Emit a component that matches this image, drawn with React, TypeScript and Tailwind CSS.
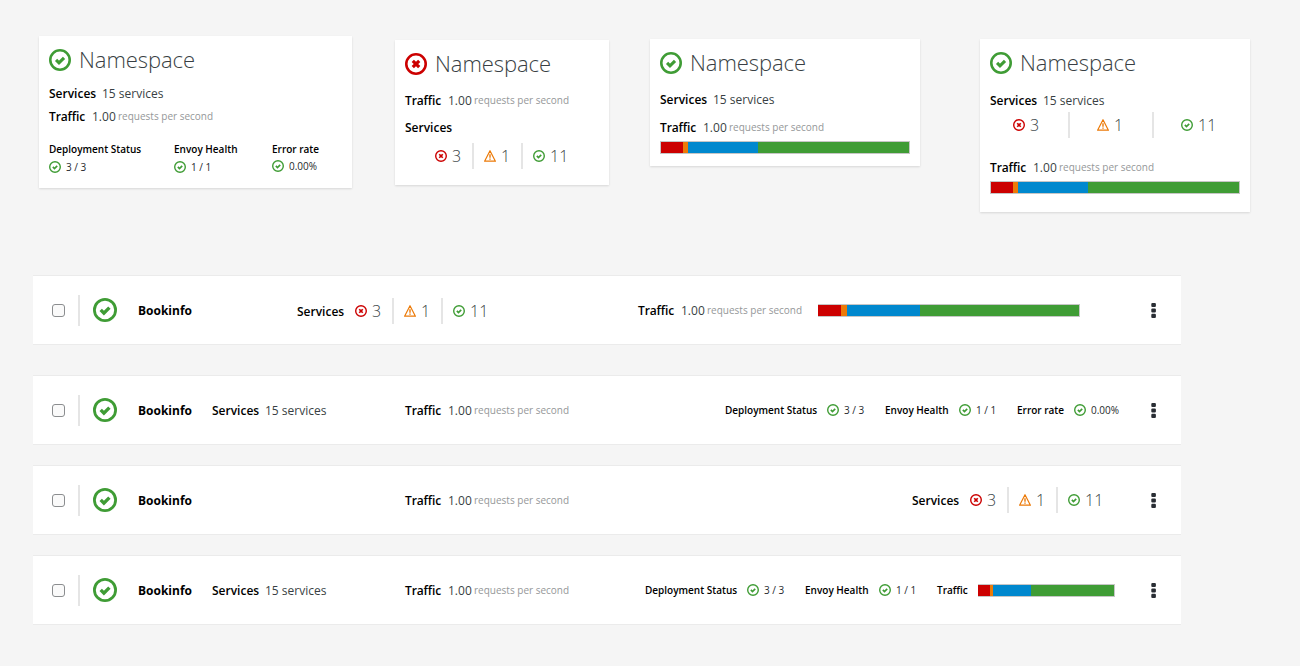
import type { ReactNode } from 'react';

type IconProps = { className?: string };

function OkIcon({ className = 'size-3' }: IconProps) {
  return (
    <svg viewBox="0 0 24 24" fill="none" stroke="#3f9c35" className={`shrink-0 ${className}`}>
      <circle cx="12" cy="12" r="10.6" strokeWidth="2.8" />
      <path d="M7.7 11.9 10.9 15.1 16.4 9.6" strokeWidth="3.4" />
    </svg>
  );
}

function ErrorIcon({ className = 'size-3' }: IconProps) {
  return (
    <svg viewBox="0 0 24 24" fill="none" stroke="#cc0000" className={`shrink-0 ${className}`}>
      <circle cx="12" cy="12" r="10.6" strokeWidth="2.8" />
      <path d="M8.5 8.5 15.5 15.5M15.5 8.5 8.5 15.5" strokeWidth="3.5" />
    </svg>
  );
}

function WarningIcon({ className = 'size-3' }: IconProps) {
  return (
    <svg viewBox="0 0 24 24" fill="none" stroke="#ec7a08" className={`shrink-0 ${className}`}>
      <path d="M12 1.4 22.8 22.4H1.2Z" strokeWidth="2.4" strokeLinejoin="round" />
      <path d="M12 8.4V15.4M12 16.8V19.6" strokeWidth="2.8" />
    </svg>
  );
}

function Label({ children, className = '' }: { children: ReactNode; className?: string }) {
  return <span className={`shrink-0 font-semibold text-black ${className}`}>{children}</span>;
}

function ServiceTotal({ className = '' }: IconProps) {
  return (
    <div className={`flex h-5 shrink-0 items-center text-xs/5 whitespace-nowrap ${className}`}>
      <Label className="w-[53px]">Services</Label>
      <span className="text-[#393f44]">15 services</span>
    </div>
  );
}

function TrafficRate({ className = '' }: IconProps) {
  return (
    <div className={`flex h-5 shrink-0 items-start text-xs/5 whitespace-nowrap ${className}`}>
      <Label className="w-[43px] tracking-[-0.1px]">Traffic</Label>
      <span className="w-[26px] text-[#393f44]">1.00</span>
      <span className="text-[10px]/[18px] text-[#959799]">requests per second</span>
    </div>
  );
}

function Count({ icon, value, className = '' }: { icon: ReactNode; value: number; className?: string }) {
  return (
    <div className={`flex shrink-0 items-center gap-[5px] ${className}`}>
      {icon}
      <span className="text-base/6 font-light text-[#393f44]">{value}</span>
    </div>
  );
}

function Divider() {
  return <div className="h-[26px] w-0.5 shrink-0 bg-[#e5e5e5]" />;
}

function ServiceCounts({ className = '' }: IconProps) {
  return (
    <div className={`flex h-[26px] shrink-0 items-center ${className}`}>
      <Count icon={<ErrorIcon />} value={3} className="w-[37px]" />
      <Divider />
      <Count icon={<WarningIcon />} value={1} className="w-[47px] pl-[10px]" />
      <Divider />
      <Count icon={<OkIcon />} value={11} className="pl-[10px]" />
    </div>
  );
}

function TrafficBar({ className, segments }: { className: string; segments: number[] }) {
  const [error, warning, info] = segments;
  return (
    <div className={`flex h-[13px] shrink-0 border-[#c6c6c6] ${className}`}>
      <div className="bg-[#cc0000]" style={{ width: error }} />
      <div className="bg-[#ec7a08]" style={{ width: warning }} />
      <div className="bg-[#0088ce]" style={{ width: info }} />
      <div className="flex-1 bg-[#3f9c35]" />
    </div>
  );
}

function Card({ className, icon, children }: { className: string; icon: ReactNode; children: ReactNode }) {
  return (
    <section className={`shrink-0 bg-white px-2.5 shadow-[0_1px_2px_rgba(3,3,3,0.12)] ${className}`}>
      <header className="flex h-12 items-center">
        {icon}
        <h2 className="mb-0.5 ml-2 text-[22px]/8 font-light tracking-[-0.06px] text-[#393f44]">Namespace</h2>
      </header>
      {children}
    </section>
  );
}

function StackedHealth({
  label,
  value,
  className = '',
  valueClass = 'mt-1',
}: {
  label: string;
  value: string;
  className?: string;
  valueClass?: string;
}) {
  return (
    <div className={`text-[10px]/[14px] whitespace-nowrap ${className}`}>
      <Label>{label}</Label>
      <div className={`flex items-center gap-[5px] text-[#26292c] ${valueClass}`}>
        <OkIcon />
        <span>{value}</span>
      </div>
    </div>
  );
}

function InlineHealth({
  label,
  value,
  className,
  labelClass,
}: {
  label: string;
  value: string;
  className: string;
  labelClass: string;
}) {
  return (
    <div className={`flex shrink-0 items-center text-[10px]/5 whitespace-nowrap text-[#26292c] ${className}`}>
      <Label className={labelClass}>{label}</Label>
      <OkIcon />
      <span className="ml-[5px]">{value}</span>
    </div>
  );
}

function Row({ children, className = '' }: { children: ReactNode; className?: string }) {
  return (
    <div className={`flex h-[70px] w-[1148px] items-center border-y border-[#ebebeb] bg-white pr-[25px] pl-[19px] ${className}`}>
      <input
        type="checkbox"
        aria-label="Select Bookinfo"
        className="size-[13px] shrink-0 appearance-none rounded-[3px] border border-[#8b8d8f] bg-[#fafafa]"
      />
      <div className="ml-[13px] h-[31px] w-0.5 shrink-0 bg-[#e5e5e5]" />
      <OkIcon className="ml-[13px] size-6" />
      <span className="mt-0.5 ml-[21px] w-[74px] shrink-0 text-xs/5 font-bold text-black">Bookinfo</span>
      {children}
      <button type="button" aria-label="Actions" className="ml-auto">
        <svg viewBox="0 0 5 16" className="h-4 w-[5px]" fill="#292e34">
          <rect x="0.3" y="0.9" width="4.6" height="4.2" rx="1.1" />
          <rect x="0.3" y="6.4" width="4.6" height="4.2" rx="1.1" />
          <rect x="0.3" y="11.8" width="4.6" height="4.2" rx="1.1" />
        </svg>
      </button>
    </div>
  );
}

export default function App() {
  return (
    <main className="h-[666px] w-[1300px] overflow-hidden bg-[#f5f5f5] pt-9 font-['Open_Sans','Noto_Sans',sans-serif]">
      <div className="flex h-[239px] items-start pl-[39px]">
        <Card className="h-[152px] w-[313px]" icon={<OkIcon className="size-[22px]" />}>
          <ServiceTotal />
          <TrafficRate className="mt-[3px]" />
          <div className="mt-[15px] flex">
            <StackedHealth label="Deployment Status" value="3 / 3" className="w-[125px]" />
            <StackedHealth label="Envoy Health" value="1 / 1" className="w-[98px]" />
            <StackedHealth label="Error rate" value="0.00%" valueClass="mt-[3px]" />
          </div>
        </Card>

        <Card className="mt-1 ml-[43px] h-[145px] w-[214px]" icon={<ErrorIcon className="size-[22px]" />}>
          <TrafficRate className="mt-[3px]" />
          <div className="mt-[7px] h-5 text-xs/5">
            <Label>Services</Label>
          </div>
          <ServiceCounts className="mt-[5px] ml-[30px]" />
        </Card>

        <Card className="mt-[3px] ml-[41px] h-[127px] w-[270px]" icon={<OkIcon className="size-[22px]" />}>
          <ServiceTotal className="mt-[3px]" />
          <TrafficRate className="mt-2" />
          <TrafficBar className="mt-[3px] border" segments={[22, 5, 70]} />
        </Card>

        <Card className="mt-[3px] ml-[60px] h-[173px] w-[270px]" icon={<OkIcon className="size-[22px]" />}>
          <ServiceTotal className="mt-1" />
          <div className="mt-[1px] flex h-[26px] items-center">
            <Count icon={<ErrorIcon />} value={3} className="w-[78px] pl-[23px]" />
            <Divider />
            <Count icon={<WarningIcon />} value={1} className="w-[82px] pl-[27px]" />
            <Divider />
            <Count icon={<OkIcon />} value={11} className="pl-[27px]" />
          </div>
          <TrafficRate className="mt-5" />
          <TrafficBar className="mt-[3px] border" segments={[22, 5, 70]} />
        </Card>
      </div>

      <div className="pl-[33px]">
        <Row>
          <Label className="mt-1 ml-[85px] w-[58px] text-xs/5">Services</Label>
          <ServiceCounts className="mt-0.5 w-[283px]" />
          <TrafficRate className="mt-0.5 w-[180px]" />
          <TrafficBar className="w-[262px] border-y border-r" segments={[23, 6, 73]} />
        </Row>

        <Row className="mt-[30px]">
          <ServiceTotal className="mt-0.5 w-[193px]" />
          <TrafficRate className="mt-0.5 w-[320px]" />
          <InlineHealth label="Deployment Status" value="3 / 3" className="w-[160px]" labelClass="w-[102px]" />
          <InlineHealth label="Envoy Health" value="1 / 1" className="w-[132px]" labelClass="w-[74px]" />
          <InlineHealth label="Error rate" value="0.00%" className="w-[104px]" labelClass="w-[57px]" />
        </Row>

        <Row className="mt-5">
          <TrafficRate className="mt-0.5 ml-[193px] w-[507px]" />
          <Label className="mt-0.5 w-[58px] text-xs/5">Services</Label>
          <ServiceCounts />
        </Row>

        <Row className="mt-5">
          <ServiceTotal className="mt-0.5 w-[193px]" />
          <TrafficRate className="mt-0.5 w-[240px]" />
          <InlineHealth label="Deployment Status" value="3 / 3" className="w-[160px]" labelClass="w-[102px]" />
          <InlineHealth label="Envoy Health" value="1 / 1" className="w-[132px]" labelClass="w-[74px]" />
          <Label className="w-[41px] text-[10px]/5">Traffic</Label>
          <TrafficBar className="w-[137px] border-y border-r" segments={[12, 3, 38]} />
        </Row>
      </div>
    </main>
  );
}
